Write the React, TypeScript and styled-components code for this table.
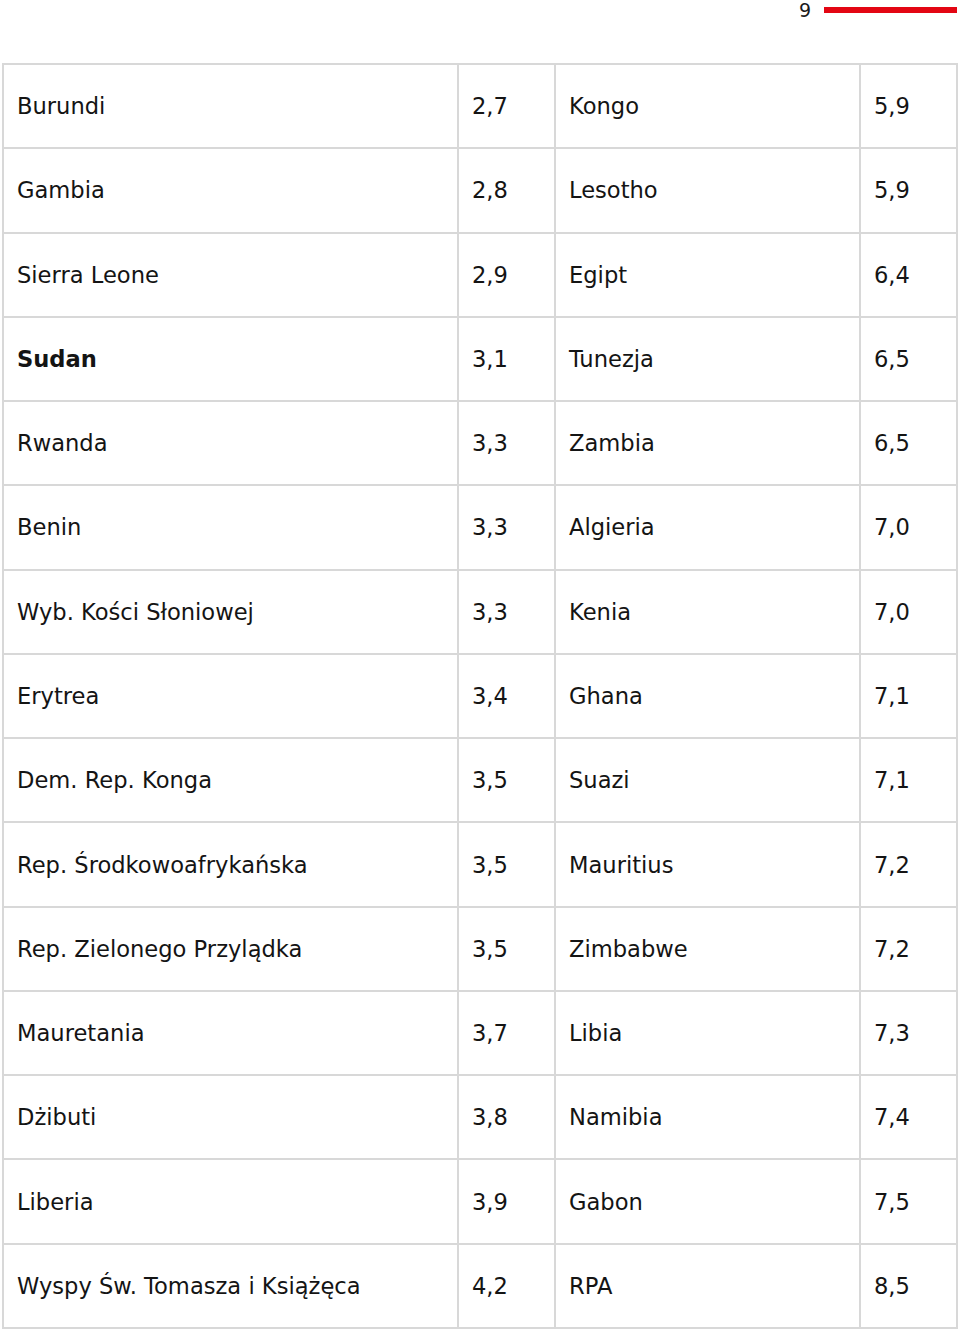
import React from 'react';
import styled, { createGlobalStyle } from 'styled-components';

const GlobalStyle = createGlobalStyle`
  html, body {
    margin: 0;
    padding: 0;
    background: #fff;
  }
  body {
    font-family: "DejaVu Sans", "Liberation Sans", sans-serif;
    color: #141414;
  }
`;

const Page = styled.div`
  width: 960px;
  height: 1330px;
  overflow: hidden;
`;

const PageHeader = styled.div`
  display: flex;
  align-items: center;
  justify-content: flex-end;
  gap: 13px;
  height: 20px;
  padding: 0 3px 43px 0;
`;

const PageNumber = styled.span`
  font-size: 19px;
  line-height: 20px;
  color: #1a1a1a;
`;

const RedBar = styled.div`
  width: 133px;
  height: 6px;
  background: #e30613;
`;

const Table = styled.table`
  margin-left: 2px;
  width: 954px;
  border-collapse: collapse;
  table-layout: fixed;
  border: 2px solid #d8d8d8;
`;

const Row = styled.tr`
  height: 84.27px;
`;

const Cell = styled.td<{ $bold?: boolean }>`
  border: 2px solid #d8d8d8;
  padding: 0 0 0 13px;
  font-size: 22.6px;
  font-weight: ${p => (p.$bold ? 700 : 400)};
  vertical-align: middle;
  white-space: nowrap;
`;

type Entry = [string, string, string, string];

const rows: Entry[] = [
  ['Burundi', '2,7', 'Kongo', '5,9'],
  ['Gambia', '2,8', 'Lesotho', '5,9'],
  ['Sierra Leone', '2,9', 'Egipt', '6,4'],
  ['Sudan', '3,1', 'Tunezja', '6,5'],
  ['Rwanda', '3,3', 'Zambia', '6,5'],
  ['Benin', '3,3', 'Algieria', '7,0'],
  ['Wyb. Kości Słoniowej', '3,3', 'Kenia', '7,0'],
  ['Erytrea', '3,4', 'Ghana', '7,1'],
  ['Dem. Rep. Konga', '3,5', 'Suazi', '7,1'],
  ['Rep. Środkowoafrykańska', '3,5', 'Mauritius', '7,2'],
  ['Rep. Zielonego Przylądka', '3,5', 'Zimbabwe', '7,2'],
  ['Mauretania', '3,7', 'Libia', '7,3'],
  ['Dżibuti', '3,8', 'Namibia', '7,4'],
  ['Liberia', '3,9', 'Gabon', '7,5'],
  ['Wyspy Św. Tomasza i Książęca', '4,2', 'RPA', '8,5'],
];

const App: React.FC = () => (
  <Page>
    <GlobalStyle />
    <PageHeader>
      <PageNumber>9</PageNumber>
      <RedBar />
    </PageHeader>
    <Table>
      <colgroup>
        <col style={{ width: 455 }} />
        <col style={{ width: 97 }} />
        <col style={{ width: 305 }} />
        <col style={{ width: 97 }} />
      </colgroup>
      <tbody>
        {rows.map(([a, b, c, d]) => (
          <Row key={a}>
            <Cell $bold={a === 'Sudan'}>{a}</Cell>
            <Cell>{b}</Cell>
            <Cell>{c}</Cell>
            <Cell>{d}</Cell>
          </Row>
        ))}
      </tbody>
    </Table>
  </Page>
);

export default App;
